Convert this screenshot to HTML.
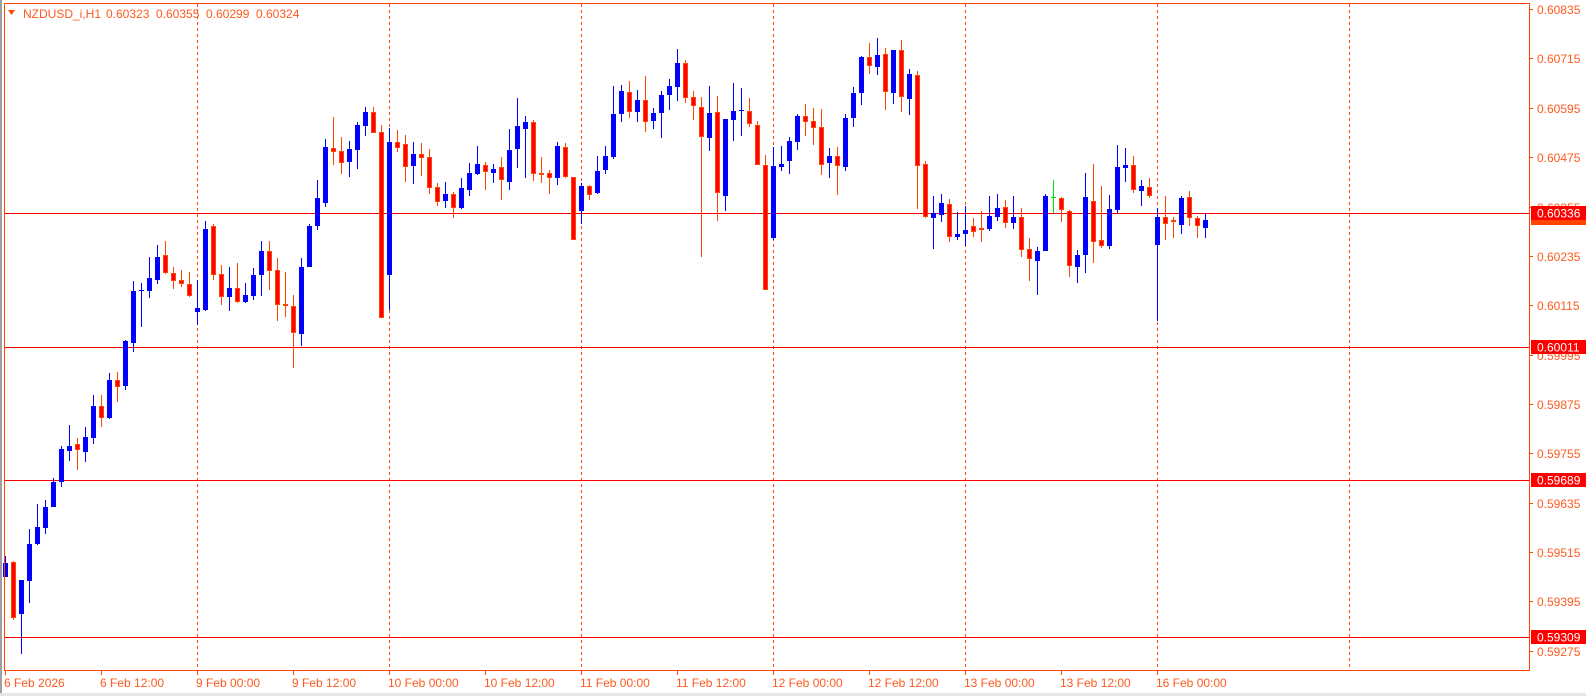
<!DOCTYPE html>
<html><head><meta charset="utf-8"><style>
html,body{margin:0;padding:0;background:#fff;width:1586px;height:696px;overflow:hidden}
svg{display:block}
text{font-family:"Liberation Sans",sans-serif;font-size:12px}
</style></head><body>
<svg width="1586" height="696" viewBox="0 0 1586 696" xmlns="http://www.w3.org/2000/svg" shape-rendering="crispEdges">
<rect width="1586" height="696" fill="#fff"/>
<rect x="0" y="0" width="2" height="696" fill="#a0a0a0"/>
<rect x="0" y="693" width="1586" height="3" fill="#e6e6e6"/>
<g stroke="#ff4500" stroke-width="1" stroke-dasharray="3,3">
<line x1="197.5" y1="4" x2="197.5" y2="670"/><line x1="389.5" y1="4" x2="389.5" y2="670"/><line x1="581.5" y1="4" x2="581.5" y2="670"/><line x1="773.5" y1="4" x2="773.5" y2="670"/><line x1="965.5" y1="4" x2="965.5" y2="670"/><line x1="1157.5" y1="4" x2="1157.5" y2="670"/><line x1="1349.5" y1="4" x2="1349.5" y2="670"/>
</g>
<g fill="#f00">
<rect x="4" y="213" width="1525" height="1"/><rect x="4" y="347" width="1525" height="1"/><rect x="4" y="480" width="1525" height="1"/><rect x="4" y="637" width="1525" height="1"/>
</g>
<g fill="#0000ff">
<rect x="5" y="556" width="1" height="21"/><rect x="3" y="563" width="5" height="14"/>
<rect x="21" y="580" width="1" height="74"/><rect x="19" y="580" width="5" height="34"/>
<rect x="29" y="529" width="1" height="74"/><rect x="27" y="544" width="5" height="37"/>
<rect x="37" y="504" width="1" height="41"/><rect x="35" y="527" width="5" height="17"/>
<rect x="45" y="500" width="1" height="34"/><rect x="43" y="507" width="5" height="21"/>
<rect x="53" y="478" width="1" height="29"/><rect x="51" y="482" width="5" height="25"/>
<rect x="61" y="446" width="1" height="41"/><rect x="59" y="449" width="5" height="33"/>
<rect x="69" y="425" width="1" height="36"/><rect x="67" y="446" width="5" height="5"/>
<rect x="85" y="427" width="1" height="35"/><rect x="83" y="437" width="5" height="15"/>
<rect x="93" y="395" width="1" height="49"/><rect x="91" y="406" width="5" height="32"/>
<rect x="109" y="373" width="1" height="46"/><rect x="107" y="380" width="5" height="38"/>
<rect x="125" y="340" width="1" height="50"/><rect x="123" y="341" width="5" height="45"/>
<rect x="133" y="281" width="1" height="71"/><rect x="131" y="291" width="5" height="52"/>
<rect x="141" y="283" width="1" height="44"/><rect x="139" y="290" width="5" height="1"/>
<rect x="149" y="257" width="1" height="41"/><rect x="147" y="278" width="5" height="13"/>
<rect x="157" y="245" width="1" height="39"/><rect x="155" y="257" width="5" height="23"/>
<rect x="197" y="280" width="1" height="45"/><rect x="195" y="308" width="5" height="4"/>
<rect x="205" y="221" width="1" height="90"/><rect x="203" y="229" width="5" height="81"/>
<rect x="229" y="267" width="1" height="44"/><rect x="227" y="288" width="5" height="9"/>
<rect x="245" y="283" width="1" height="20"/><rect x="243" y="295" width="5" height="7"/>
<rect x="253" y="268" width="1" height="32"/><rect x="251" y="275" width="5" height="21"/>
<rect x="261" y="241" width="1" height="55"/><rect x="259" y="251" width="5" height="24"/>
<rect x="301" y="258" width="1" height="88"/><rect x="299" y="267" width="5" height="67"/>
<rect x="309" y="224" width="1" height="43"/><rect x="307" y="226" width="5" height="41"/>
<rect x="317" y="180" width="1" height="50"/><rect x="315" y="198" width="5" height="28"/>
<rect x="325" y="139" width="1" height="68"/><rect x="323" y="147" width="5" height="56"/>
<rect x="349" y="141" width="1" height="36"/><rect x="347" y="149" width="5" height="13"/>
<rect x="357" y="122" width="1" height="47"/><rect x="355" y="125" width="5" height="25"/>
<rect x="365" y="107" width="1" height="29"/><rect x="363" y="112" width="5" height="14"/>
<rect x="389" y="128" width="1" height="182"/><rect x="387" y="142" width="5" height="133"/>
<rect x="413" y="142" width="1" height="42"/><rect x="411" y="154" width="5" height="12"/>
<rect x="445" y="182" width="1" height="26"/><rect x="443" y="194" width="5" height="7"/>
<rect x="461" y="178" width="1" height="31"/><rect x="459" y="188" width="5" height="20"/>
<rect x="469" y="163" width="1" height="33"/><rect x="467" y="173" width="5" height="17"/>
<rect x="477" y="146" width="1" height="29"/><rect x="475" y="164" width="5" height="10"/>
<rect x="493" y="164" width="1" height="19"/><rect x="491" y="169" width="5" height="4"/>
<rect x="509" y="129" width="1" height="61"/><rect x="507" y="150" width="5" height="32"/>
<rect x="517" y="98" width="1" height="70"/><rect x="515" y="126" width="5" height="23"/>
<rect x="525" y="116" width="1" height="62"/><rect x="523" y="122" width="5" height="7"/>
<rect x="557" y="142" width="1" height="43"/><rect x="555" y="146" width="5" height="32"/>
<rect x="581" y="183" width="1" height="41"/><rect x="579" y="186" width="5" height="25"/>
<rect x="597" y="156" width="1" height="38"/><rect x="595" y="171" width="5" height="22"/>
<rect x="605" y="146" width="1" height="28"/><rect x="603" y="156" width="5" height="14"/>
<rect x="613" y="86" width="1" height="73"/><rect x="611" y="114" width="5" height="43"/>
<rect x="621" y="85" width="1" height="37"/><rect x="619" y="91" width="5" height="23"/>
<rect x="637" y="90" width="1" height="32"/><rect x="635" y="100" width="5" height="12"/>
<rect x="653" y="108" width="1" height="21"/><rect x="651" y="113" width="5" height="8"/>
<rect x="661" y="91" width="1" height="47"/><rect x="659" y="95" width="5" height="18"/>
<rect x="669" y="79" width="1" height="31"/><rect x="667" y="86" width="5" height="9"/>
<rect x="677" y="49" width="1" height="52"/><rect x="675" y="63" width="5" height="24"/>
<rect x="709" y="86" width="1" height="65"/><rect x="707" y="113" width="5" height="25"/>
<rect x="725" y="119" width="1" height="92"/><rect x="723" y="119" width="5" height="77"/>
<rect x="733" y="83" width="1" height="58"/><rect x="731" y="111" width="5" height="9"/>
<rect x="741" y="88" width="1" height="48"/><rect x="739" y="110" width="5" height="1"/>
<rect x="773" y="147" width="1" height="93"/><rect x="771" y="166" width="5" height="72"/>
<rect x="781" y="146" width="1" height="25"/><rect x="779" y="164" width="5" height="3"/>
<rect x="789" y="137" width="1" height="37"/><rect x="787" y="141" width="5" height="20"/>
<rect x="797" y="114" width="1" height="36"/><rect x="795" y="116" width="5" height="26"/>
<rect x="829" y="148" width="1" height="30"/><rect x="827" y="156" width="5" height="7"/>
<rect x="845" y="114" width="1" height="57"/><rect x="843" y="118" width="5" height="49"/>
<rect x="853" y="87" width="1" height="40"/><rect x="851" y="93" width="5" height="25"/>
<rect x="861" y="56" width="1" height="49"/><rect x="859" y="57" width="5" height="36"/>
<rect x="877" y="38" width="1" height="37"/><rect x="875" y="55" width="5" height="12"/>
<rect x="893" y="50" width="1" height="54"/><rect x="891" y="50" width="5" height="43"/>
<rect x="909" y="69" width="1" height="46"/><rect x="907" y="74" width="5" height="25"/>
<rect x="933" y="196" width="1" height="53"/><rect x="931" y="213" width="5" height="5"/>
<rect x="941" y="194" width="1" height="28"/><rect x="939" y="203" width="5" height="12"/>
<rect x="957" y="212" width="1" height="28"/><rect x="955" y="234" width="5" height="3"/>
<rect x="965" y="206" width="1" height="40"/><rect x="963" y="230" width="5" height="4"/>
<rect x="989" y="196" width="1" height="35"/><rect x="987" y="216" width="5" height="13"/>
<rect x="997" y="194" width="1" height="27"/><rect x="995" y="208" width="5" height="9"/>
<rect x="1013" y="196" width="1" height="33"/><rect x="1011" y="217" width="5" height="6"/>
<rect x="1037" y="247" width="1" height="48"/><rect x="1035" y="251" width="5" height="10"/>
<rect x="1045" y="194" width="1" height="57"/><rect x="1043" y="196" width="5" height="55"/>
<rect x="1077" y="250" width="1" height="33"/><rect x="1075" y="255" width="5" height="12"/>
<rect x="1085" y="173" width="1" height="100"/><rect x="1083" y="197" width="5" height="58"/>
<rect x="1109" y="195" width="1" height="54"/><rect x="1107" y="209" width="5" height="37"/>
<rect x="1117" y="145" width="1" height="68"/><rect x="1115" y="167" width="5" height="43"/>
<rect x="1125" y="148" width="1" height="34"/><rect x="1123" y="165" width="5" height="3"/>
<rect x="1141" y="180" width="1" height="26"/><rect x="1139" y="186" width="5" height="5"/>
<rect x="1157" y="208" width="1" height="113"/><rect x="1155" y="217" width="5" height="28"/>
<rect x="1181" y="196" width="1" height="38"/><rect x="1179" y="198" width="5" height="27"/>
<rect x="1205" y="213" width="1" height="25"/><rect x="1203" y="220" width="5" height="8"/>
</g>
<g fill="#00e000"><rect x="1053" y="180" width="1" height="33"/><rect x="1051" y="197" width="5" height="1"/></g>
<g fill="#ff4500">
<rect x="13" y="561" width="1" height="59"/><rect x="77" y="438" width="1" height="32"/><rect x="101" y="395" width="1" height="32"/><rect x="117" y="372" width="1" height="30"/>
<rect x="165" y="241" width="1" height="33"/><rect x="173" y="267" width="1" height="22"/><rect x="181" y="270" width="1" height="17"/><rect x="189" y="272" width="1" height="25"/>
<rect x="213" y="224" width="1" height="56"/><rect x="221" y="265" width="1" height="40"/><rect x="237" y="263" width="1" height="40"/><rect x="269" y="241" width="1" height="49"/>
<rect x="277" y="258" width="1" height="63"/><rect x="285" y="272" width="1" height="45"/><rect x="293" y="295" width="1" height="73"/><rect x="333" y="117" width="1" height="48"/>
<rect x="341" y="137" width="1" height="37"/><rect x="373" y="107" width="1" height="26"/><rect x="381" y="125" width="1" height="193"/><rect x="397" y="130" width="1" height="22"/>
<rect x="405" y="135" width="1" height="47"/><rect x="421" y="143" width="1" height="33"/><rect x="429" y="149" width="1" height="45"/><rect x="437" y="183" width="1" height="23"/>
<rect x="453" y="192" width="1" height="26"/><rect x="485" y="162" width="1" height="28"/><rect x="501" y="157" width="1" height="43"/><rect x="533" y="120" width="1" height="61"/>
<rect x="541" y="157" width="1" height="26"/><rect x="549" y="170" width="1" height="24"/><rect x="565" y="143" width="1" height="35"/><rect x="573" y="177" width="1" height="63"/>
<rect x="589" y="185" width="1" height="15"/><rect x="629" y="81" width="1" height="37"/><rect x="645" y="76" width="1" height="56"/><rect x="685" y="60" width="1" height="43"/>
<rect x="693" y="91" width="1" height="29"/><rect x="701" y="97" width="1" height="160"/><rect x="717" y="96" width="1" height="125"/><rect x="749" y="98" width="1" height="29"/>
<rect x="757" y="121" width="1" height="44"/><rect x="765" y="155" width="1" height="135"/><rect x="805" y="104" width="1" height="32"/><rect x="813" y="108" width="1" height="37"/>
<rect x="821" y="109" width="1" height="66"/><rect x="837" y="147" width="1" height="48"/><rect x="869" y="43" width="1" height="31"/><rect x="885" y="48" width="1" height="62"/>
<rect x="901" y="40" width="1" height="72"/><rect x="917" y="71" width="1" height="138"/><rect x="925" y="161" width="1" height="57"/><rect x="949" y="199" width="1" height="43"/>
<rect x="973" y="218" width="1" height="19"/><rect x="981" y="211" width="1" height="31"/><rect x="1005" y="200" width="1" height="28"/><rect x="1021" y="208" width="1" height="49"/>
<rect x="1029" y="238" width="1" height="43"/><rect x="1061" y="197" width="1" height="25"/><rect x="1069" y="210" width="1" height="67"/><rect x="1093" y="164" width="1" height="99"/>
<rect x="1101" y="186" width="1" height="62"/><rect x="1133" y="156" width="1" height="37"/><rect x="1149" y="178" width="1" height="20"/><rect x="1165" y="196" width="1" height="44"/>
<rect x="1173" y="217" width="1" height="21"/><rect x="1189" y="191" width="1" height="35"/><rect x="1197" y="216" width="1" height="22"/>
<rect x="283" y="304" width="5" height="2"/><rect x="539" y="173" width="5" height="2"/><rect x="979" y="228" width="5" height="2"/><rect x="1171" y="220" width="5" height="2"/>
</g>
<g fill="#ff0000" stroke="#ff4500" stroke-width="1" shape-rendering="auto">
<rect x="11.5" y="562.5" width="4" height="55"/><rect x="75.5" y="444.5" width="4" height="5"/><rect x="99.5" y="406.5" width="4" height="11"/><rect x="115.5" y="380.5" width="4" height="6"/>
<rect x="163.5" y="255.5" width="4" height="17"/><rect x="171.5" y="273.5" width="4" height="7"/><rect x="179.5" y="280.5" width="4" height="3"/><rect x="187.5" y="284.5" width="4" height="11"/>
<rect x="211.5" y="226.5" width="4" height="48"/><rect x="219.5" y="274.5" width="4" height="22"/><rect x="235.5" y="288.5" width="4" height="13"/><rect x="267.5" y="251.5" width="4" height="19"/>
<rect x="275.5" y="270.5" width="4" height="34"/><rect x="291.5" y="306.5" width="4" height="26"/><rect x="331.5" y="148.5" width="4" height="3"/><rect x="339.5" y="151.5" width="4" height="11"/>
<rect x="371.5" y="112.5" width="4" height="20"/><rect x="379.5" y="132.5" width="4" height="185"/><rect x="395.5" y="142.5" width="4" height="5"/><rect x="403.5" y="144.5" width="4" height="22"/>
<rect x="419.5" y="154.5" width="4" height="3"/><rect x="427.5" y="157.5" width="4" height="30"/><rect x="435.5" y="187.5" width="4" height="14"/><rect x="451.5" y="194.5" width="4" height="13"/>
<rect x="483.5" y="165.5" width="4" height="6"/><rect x="499.5" y="167.5" width="4" height="12"/><rect x="531.5" y="122.5" width="4" height="51"/><rect x="547.5" y="173.5" width="4" height="4"/>
<rect x="563.5" y="147.5" width="4" height="29"/><rect x="571.5" y="177.5" width="4" height="62"/><rect x="587.5" y="186.5" width="4" height="8"/><rect x="627.5" y="92.5" width="4" height="19"/>
<rect x="643.5" y="100.5" width="4" height="21"/><rect x="683.5" y="63.5" width="4" height="34"/><rect x="691.5" y="97.5" width="4" height="8"/><rect x="699.5" y="107.5" width="4" height="29"/>
<rect x="715.5" y="112.5" width="4" height="80"/><rect x="747.5" y="111.5" width="4" height="12"/><rect x="755.5" y="125.5" width="4" height="39"/><rect x="763.5" y="165.5" width="4" height="124"/>
<rect x="803.5" y="116.5" width="4" height="5"/><rect x="811.5" y="121.5" width="4" height="6"/><rect x="819.5" y="127.5" width="4" height="37"/><rect x="835.5" y="156.5" width="4" height="9"/>
<rect x="867.5" y="57.5" width="4" height="8"/><rect x="883.5" y="54.5" width="4" height="37"/><rect x="899.5" y="50.5" width="4" height="46"/><rect x="915.5" y="75.5" width="4" height="90"/>
<rect x="923.5" y="164.5" width="4" height="52"/><rect x="947.5" y="204.5" width="4" height="32"/><rect x="971.5" y="226.5" width="4" height="5"/><rect x="1003.5" y="207.5" width="4" height="15"/>
<rect x="1019.5" y="217.5" width="4" height="32"/><rect x="1027.5" y="249.5" width="4" height="9"/><rect x="1059.5" y="198.5" width="4" height="11"/><rect x="1067.5" y="211.5" width="4" height="54"/>
<rect x="1091.5" y="201.5" width="4" height="40"/><rect x="1099.5" y="240.5" width="4" height="5"/><rect x="1131.5" y="165.5" width="4" height="24"/><rect x="1147.5" y="187.5" width="4" height="8"/>
<rect x="1163.5" y="217.5" width="4" height="6"/><rect x="1187.5" y="197.5" width="4" height="20"/><rect x="1195.5" y="218.5" width="4" height="7"/>
</g>
<g fill="#ff4500">
<rect x="4" y="3" width="1526" height="1"/><rect x="4" y="3" width="1" height="668"/><rect x="1529" y="3" width="1" height="668"/><rect x="4" y="670" width="1526" height="1"/>
</g>
<g fill="#ff4500">
<rect x="1529" y="9" width="4" height="1"/><rect x="1529" y="58" width="4" height="1"/><rect x="1529" y="108" width="4" height="1"/><rect x="1529" y="157" width="4" height="1"/><rect x="1529" y="207" width="4" height="1"/><rect x="1529" y="256" width="4" height="1"/><rect x="1529" y="305" width="4" height="1"/><rect x="1529" y="355" width="4" height="1"/><rect x="1529" y="404" width="4" height="1"/><rect x="1529" y="453" width="4" height="1"/><rect x="1529" y="503" width="4" height="1"/><rect x="1529" y="552" width="4" height="1"/><rect x="1529" y="601" width="4" height="1"/><rect x="1529" y="651" width="4" height="1"/>
</g>
<g fill="#ff5a1e">
<text x="1537" y="14">0.60835</text><text x="1537" y="63">0.60715</text><text x="1537" y="113">0.60595</text><text x="1537" y="162">0.60475</text><text x="1537" y="212">0.60355</text><text x="1537" y="261">0.60235</text><text x="1537" y="310">0.60115</text><text x="1537" y="360">0.59995</text><text x="1537" y="409">0.59875</text><text x="1537" y="458">0.59755</text><text x="1537" y="508">0.59635</text><text x="1537" y="557">0.59515</text><text x="1537" y="606">0.59395</text><text x="1537" y="656">0.59275</text>
</g>
<rect x="1531" y="211" width="55" height="14" fill="#ff4500"/>
<g fill="#ff0000">
<rect x="1531" y="206" width="55" height="14"/><rect x="1531" y="340" width="55" height="14"/><rect x="1531" y="473" width="55" height="14"/><rect x="1531" y="630" width="55" height="14"/>
</g>
<g fill="#fff">
<text x="1537" y="217.5">0.60336</text><text x="1537" y="351.5">0.60011</text><text x="1537" y="484.5">0.59689</text><text x="1537" y="641.5">0.59309</text>
</g>
<g fill="#ff4500">
<rect x="5" y="670" width="1" height="5"/><rect x="101" y="670" width="1" height="5"/><rect x="197" y="670" width="1" height="5"/><rect x="293" y="670" width="1" height="5"/><rect x="389" y="670" width="1" height="5"/><rect x="485" y="670" width="1" height="5"/><rect x="581" y="670" width="1" height="5"/><rect x="677" y="670" width="1" height="5"/><rect x="773" y="670" width="1" height="5"/><rect x="869" y="670" width="1" height="5"/><rect x="965" y="670" width="1" height="5"/><rect x="1061" y="670" width="1" height="5"/><rect x="1157" y="670" width="1" height="5"/>
</g>
<g fill="#ff5a1e">
<text x="4" y="687">6 Feb 2026</text><text x="100" y="687">6 Feb 12:00</text><text x="196" y="687">9 Feb 00:00</text><text x="292" y="687">9 Feb 12:00</text><text x="388" y="687">10 Feb 00:00</text><text x="484" y="687">10 Feb 12:00</text><text x="580" y="687">11 Feb 00:00</text><text x="676" y="687">11 Feb 12:00</text><text x="772" y="687">12 Feb 00:00</text><text x="868" y="687">12 Feb 12:00</text><text x="964" y="687">13 Feb 00:00</text><text x="1060" y="687">13 Feb 12:00</text><text x="1156" y="687">16 Feb 00:00</text>
</g>
<path d="M8 10 L15 10 L11.5 15 Z" fill="#ff4500" shape-rendering="auto"/>
<g fill="#ff5a1e">
<text x="23" y="18">NZDUSD_i,H1</text>
<text x="106" y="18">0.60323</text><text x="156" y="18">0.60355</text><text x="206" y="18">0.60299</text><text x="256" y="18">0.60324</text>
</g>
</svg>
</body></html>
